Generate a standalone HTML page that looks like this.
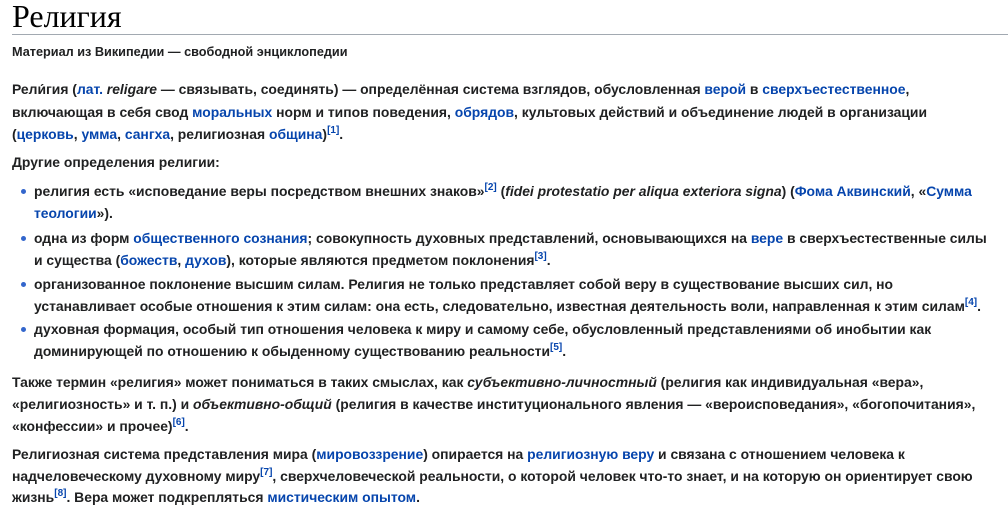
<!DOCTYPE html>
<html><head><meta charset="utf-8"><style>
body{margin:0;background:#fff;width:1008px;height:514px;overflow:hidden;font-family:"Liberation Sans",Arial,sans-serif;color:#202122;}
.w{position:absolute;left:12px;top:0;right:0}
h1{font-family:"Liberation Serif",serif;font-weight:normal;font-size:32px;margin:0;position:absolute;top:-2px;left:0;line-height:36px;color:#000}
.hr{position:absolute;top:34px;left:0;width:1000px;height:1px;background:#a2a9b1}
.l{position:absolute;white-space:nowrap;font-size:13.9px;font-weight:bold;line-height:18px}
.sub{font-size:12.7px}
a{color:#0645ad;text-decoration:none}
sup{font-size:10px;line-height:0;vertical-align:6px}
.b{position:absolute;width:5px;height:5px;border-radius:50%;background:#36c}
</style></head><body><div class="w">
<h1>Религия</h1><div class="hr"></div>
<div class="l sub" style="top:43px">Материал из Википедии — свободной энциклопедии</div>
<div class="l" style="top:80px">Рели́гия (<a>лат.</a> <i>religare</i> — связывать, соединять) — определённая система взглядов, обусловленная <a>верой</a> в <a>сверхъестественное</a>,</div>
<div class="l" style="top:103px">включающая в себя свод <a>моральных</a> норм и типов поведения, <a>обрядов</a>, культовых действий и объединение людей в организации</div>
<div class="l" style="top:125px">(<a>церковь</a>, <a>умма</a>, <a>сангха</a>, религиозная <a>община</a>)<sup><a>[1]</a></sup>.</div>
<div class="l" style="top:153px">Другие определения религии:</div>
<div class="b" style="left:9px;top:189px"></div>
<div class="l" style="left:22px;top:182px">религия есть «исповедание веры посредством внешних знаков»<sup><a>[2]</a></sup> (<i>fidei protestatio per aliqua exteriora signa</i>) (<a>Фома Аквинский</a>, «<a>Сумма</a></div>
<div class="l" style="left:22px;top:204px"><a>теологии</a>»).</div>
<div class="b" style="left:9px;top:236px"></div>
<div class="l" style="left:22px;top:229px">одна из форм <a>общественного сознания</a>; совокупность духовных представлений, основывающихся на <a>вере</a> в сверхъестественные силы</div>
<div class="l" style="left:22px;top:251px">и существа (<a>божеств</a>, <a>духов</a>), которые являются предметом поклонения<sup><a>[3]</a></sup>.</div>
<div class="b" style="left:9px;top:282px"></div>
<div class="l" style="left:22px;top:275px">организованное поклонение высшим силам. Религия не только представляет собой веру в существование высших сил, но</div>
<div class="l" style="left:22px;top:297px">устанавливает особые отношения к этим силам: она есть, следовательно, известная деятельность воли, направленная к этим силам<sup><a>[4]</a></sup>.</div>
<div class="b" style="left:9px;top:327px"></div>
<div class="l" style="left:22px;top:320px">духовная формация, особый тип отношения человека к миру и самому себе, обусловленный представлениями об инобытии как</div>
<div class="l" style="left:22px;top:342px">доминирующей по отношению к обыденному существованию реальности<sup><a>[5]</a></sup>.</div>
<div class="l" style="top:373px">Также термин «религия» может пониматься в таких смыслах, как <i>субъективно-личностный</i> (религия как индивидуальная «вера»,</div>
<div class="l" style="top:395px">«религиозность» и т. п.) и <i>объективно-общий</i> (религия в качестве институционального явления — «вероисповедания», «богопочитания»,</div>
<div class="l" style="top:417px">«конфессии» и прочее)<sup><a>[6]</a></sup>.</div>
<div class="l" style="top:445px">Религиозная система представления мира (<a>мировоззрение</a>) опирается на <a>религиозную веру</a> и связана с отношением человека к</div>
<div class="l" style="top:467px">надчеловеческому духовному миру<sup><a>[7]</a></sup>, сверхчеловеческой реальности, о которой человек что-то знает, и на которую он ориентирует свою</div>
<div class="l" style="top:488px">жизнь<sup><a>[8]</a></sup>. Вера может подкрепляться <a>мистическим опытом</a>.</div>
</div></body></html>
